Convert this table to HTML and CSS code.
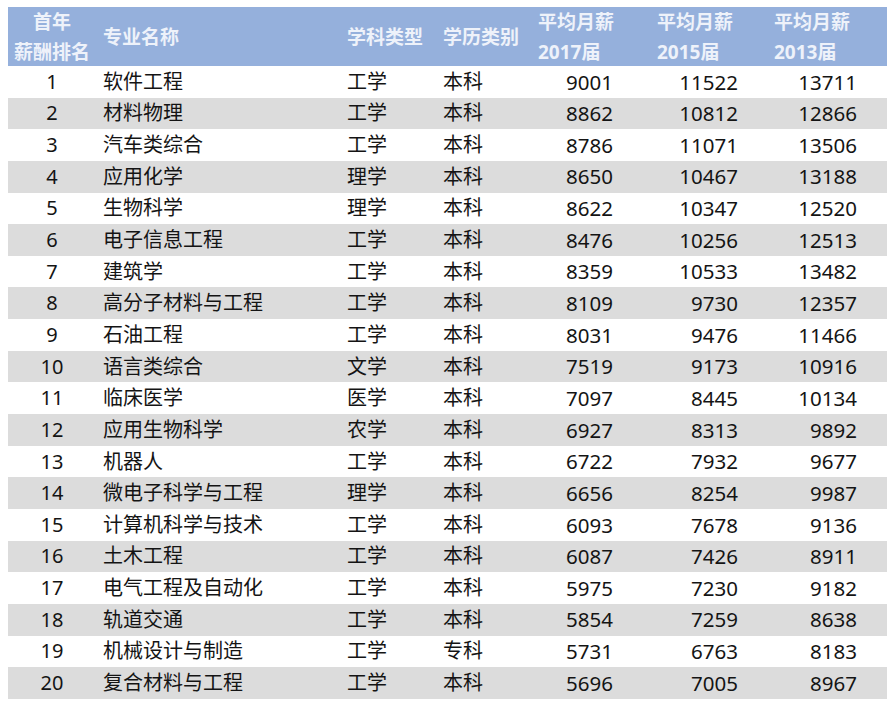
FILE: index.html
```html
<!DOCTYPE html>
<html lang="zh">
<head>
<meta charset="utf-8">
<title>薪酬排名</title>
<link rel="stylesheet" href="styles.css">
</head>
<body>
<div class="table">
  <div class="row head">
    <div class="c rank two">首年<br>薪酬排名</div>
    <div class="c name">专业名称</div>
    <div class="c type">学科类型</div>
    <div class="c edu">学历类别</div>
    <div class="c h17 two">平均月薪<br>2017届</div>
    <div class="c h15 two">平均月薪<br>2015届</div>
    <div class="c h13 two">平均月薪<br>2013届</div>
  </div>
  <div class="row"><div class="c rank">1</div><div class="c name">软件工程</div><div class="c type">工学</div><div class="c edu">本科</div><div class="c n17">9001</div><div class="c n15">11522</div><div class="c n13">13711</div></div>
  <div class="row alt"><div class="c rank">2</div><div class="c name">材料物理</div><div class="c type">工学</div><div class="c edu">本科</div><div class="c n17">8862</div><div class="c n15">10812</div><div class="c n13">12866</div></div>
  <div class="row"><div class="c rank">3</div><div class="c name">汽车类综合</div><div class="c type">工学</div><div class="c edu">本科</div><div class="c n17">8786</div><div class="c n15">11071</div><div class="c n13">13506</div></div>
  <div class="row alt"><div class="c rank">4</div><div class="c name">应用化学</div><div class="c type">理学</div><div class="c edu">本科</div><div class="c n17">8650</div><div class="c n15">10467</div><div class="c n13">13188</div></div>
  <div class="row"><div class="c rank">5</div><div class="c name">生物科学</div><div class="c type">理学</div><div class="c edu">本科</div><div class="c n17">8622</div><div class="c n15">10347</div><div class="c n13">12520</div></div>
  <div class="row alt"><div class="c rank">6</div><div class="c name">电子信息工程</div><div class="c type">工学</div><div class="c edu">本科</div><div class="c n17">8476</div><div class="c n15">10256</div><div class="c n13">12513</div></div>
  <div class="row"><div class="c rank">7</div><div class="c name">建筑学</div><div class="c type">工学</div><div class="c edu">本科</div><div class="c n17">8359</div><div class="c n15">10533</div><div class="c n13">13482</div></div>
  <div class="row alt"><div class="c rank">8</div><div class="c name">高分子材料与工程</div><div class="c type">工学</div><div class="c edu">本科</div><div class="c n17">8109</div><div class="c n15">9730</div><div class="c n13">12357</div></div>
  <div class="row"><div class="c rank">9</div><div class="c name">石油工程</div><div class="c type">工学</div><div class="c edu">本科</div><div class="c n17">8031</div><div class="c n15">9476</div><div class="c n13">11466</div></div>
  <div class="row alt"><div class="c rank">10</div><div class="c name">语言类综合</div><div class="c type">文学</div><div class="c edu">本科</div><div class="c n17">7519</div><div class="c n15">9173</div><div class="c n13">10916</div></div>
  <div class="row"><div class="c rank">11</div><div class="c name">临床医学</div><div class="c type">医学</div><div class="c edu">本科</div><div class="c n17">7097</div><div class="c n15">8445</div><div class="c n13">10134</div></div>
  <div class="row alt"><div class="c rank">12</div><div class="c name">应用生物科学</div><div class="c type">农学</div><div class="c edu">本科</div><div class="c n17">6927</div><div class="c n15">8313</div><div class="c n13">9892</div></div>
  <div class="row"><div class="c rank">13</div><div class="c name">机器人</div><div class="c type">工学</div><div class="c edu">本科</div><div class="c n17">6722</div><div class="c n15">7932</div><div class="c n13">9677</div></div>
  <div class="row alt"><div class="c rank">14</div><div class="c name">微电子科学与工程</div><div class="c type">理学</div><div class="c edu">本科</div><div class="c n17">6656</div><div class="c n15">8254</div><div class="c n13">9987</div></div>
  <div class="row"><div class="c rank">15</div><div class="c name">计算机科学与技术</div><div class="c type">工学</div><div class="c edu">本科</div><div class="c n17">6093</div><div class="c n15">7678</div><div class="c n13">9136</div></div>
  <div class="row alt"><div class="c rank">16</div><div class="c name">土木工程</div><div class="c type">工学</div><div class="c edu">本科</div><div class="c n17">6087</div><div class="c n15">7426</div><div class="c n13">8911</div></div>
  <div class="row"><div class="c rank">17</div><div class="c name">电气工程及自动化</div><div class="c type">工学</div><div class="c edu">本科</div><div class="c n17">5975</div><div class="c n15">7230</div><div class="c n13">9182</div></div>
  <div class="row alt"><div class="c rank">18</div><div class="c name">轨道交通</div><div class="c type">工学</div><div class="c edu">本科</div><div class="c n17">5854</div><div class="c n15">7259</div><div class="c n13">8638</div></div>
  <div class="row"><div class="c rank">19</div><div class="c name">机械设计与制造</div><div class="c type">工学</div><div class="c edu">专科</div><div class="c n17">5731</div><div class="c n15">6763</div><div class="c n13">8183</div></div>
  <div class="row alt"><div class="c rank">20</div><div class="c name">复合材料与工程</div><div class="c type">工学</div><div class="c edu">本科</div><div class="c n17">5696</div><div class="c n15">7005</div><div class="c n13">8967</div></div>
</div>
</body>
</html>
```

FILE: styles.css
```css
html, body {
  margin: 0;
  padding: 0;
  background: #ffffff;
}
body {
  font-family: "Noto Sans", "Noto Sans CJK SC", sans-serif;
  color: #141414;
}
.table {
  margin: 7px 0 0 8px;
  width: 879px;
}
.row {
  display: grid;
  grid-template-columns: 88px 244px 96px 94px 110px 120px 127px;
  height: 31.65px;
  font-size: 20px;
  background: #ffffff;
}
.row.alt {
  background: #dcdcdc;
}
.row.head {
  height: 59px;
  background: #95b0dc;
  color: #eef2fa;
  font-weight: bold;
  font-size: 19px;
}
.c {
  display: flex;
  align-items: center;
  white-space: nowrap;
  line-height: 1;
}
.head .two {
  display: block;
  line-height: 30px;
}
.rank { justify-content: center; text-align: center; }
.name, .type, .edu { padding-left: 7px; }
.h17 { padding-left: 8px; }
.h15 { padding-left: 17px; }
.h13 { padding-left: 14px; }
.n17, .n15, .n13 { justify-content: flex-end; font-size: 20.5px; }
.n17 { padding-right: 27px; }
.n15 { padding-right: 22px; }
.n13 { padding-right: 30px; }
```
